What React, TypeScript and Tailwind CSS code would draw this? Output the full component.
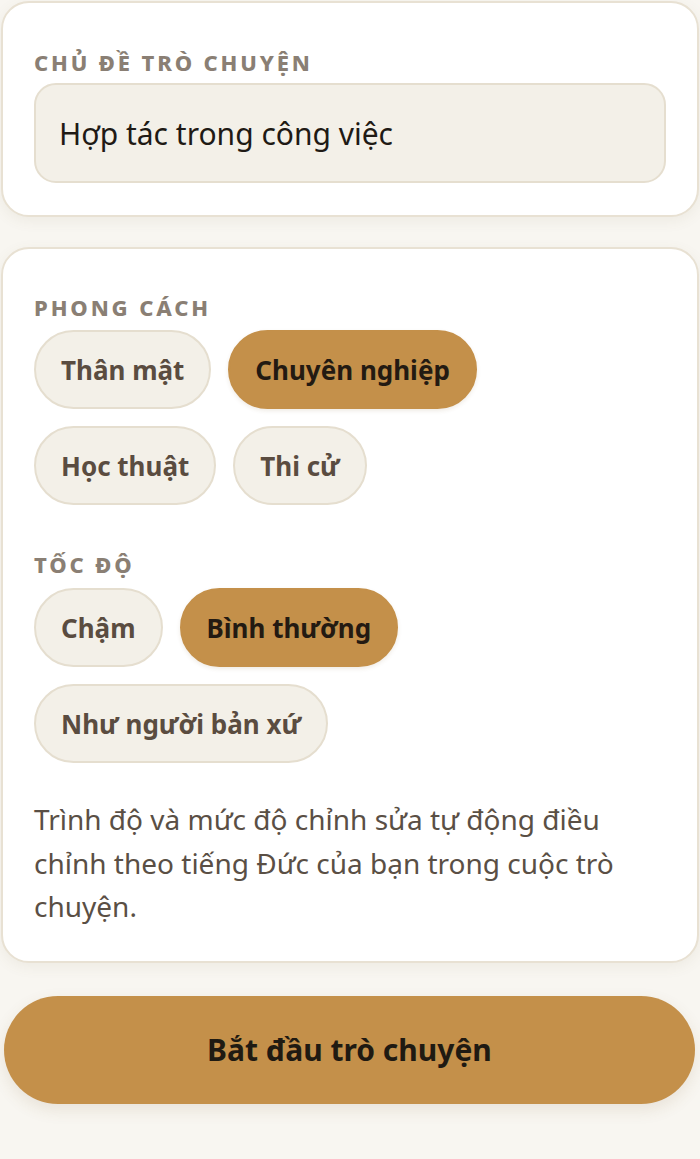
import React from "react";

const font = { fontFamily: "'Noto Sans', 'Open Sans', sans-serif" };

function Chip({ label, active }: { label: string; active?: boolean }) {
  return (
    <button
      className={
        active
          ? "h-[79px] px-[25px] rounded-full border-2 border-[#c4904a] bg-[#c4904a] text-[26px] leading-[32px] font-bold text-[#231a12] shadow-[0_2px_4px_rgba(120,90,40,0.12)]"
          : "h-[79px] px-[25px] rounded-full border-2 border-[#e5decf] bg-[#f3f0e8] text-[26px] leading-[32px] font-bold text-[#5a4c40]"
      }
    >
      {label}
    </button>
  );
}

function Label({ children }: { children: React.ReactNode }) {
  return (
    <div className="text-[22px] leading-[28px] font-extrabold tracking-[0.13em] text-[#8a7f74] uppercase">
      {children}
    </div>
  );
}

export default function App() {
  return (
    <div style={font} className="min-h-[1159px] bg-[#f8f6f1] px-[1px] pt-[1px] pb-[55px]">
      <div className="rounded-[28px] border-2 border-[#e8e1d3] bg-white px-[31px] pt-[45px] pb-[32px] shadow-[0_4px_14px_rgba(120,100,60,0.08)]">
        <Label>Chủ đề trò chuyện</Label>
        <div className="mt-[7px] h-[100px] rounded-[22px] border-2 border-[#e5decf] bg-[#f3f0e8] flex items-center px-[23px] text-[30px] text-[#1f1a15]">
          Hợp tác trong công việc
        </div>
      </div>

      <div className="mt-[30px] rounded-[28px] border-2 border-[#e8e1d3] bg-white px-[31px] pt-[44px] pb-[32px] shadow-[0_4px_14px_rgba(120,100,60,0.08)]">
        <Label>Phong cách</Label>
        <div className="mt-[9px] flex flex-wrap gap-[17px]">
          <Chip label="Thân mật" />
          <Chip label="Chuyên nghiệp" active />
          <Chip label="Học thuật" />
          <Chip label="Thi cử" />
        </div>
        <div className="mt-[45px]">
          <Label>Tốc độ</Label>
        </div>
        <div className="mt-[10px] flex flex-wrap gap-[17px]">
          <Chip label="Chậm" />
          <Chip label="Bình thường" active />
          <Chip label="Như người bản xứ" />
        </div>
        <p className="mt-[35px] text-[28px] leading-[43.5px] text-[#5a4f45]">
          Trình độ và mức độ chỉnh sửa tự động điều chỉnh theo tiếng Đức của bạn trong cuộc trò chuyện.
        </p>
      </div>

      <button className="mt-[33px] mx-[3px] w-[691px] h-[108px] rounded-full bg-[#c4904a] text-[30px] font-bold text-[#1f1a12] shadow-[0_6px_16px_rgba(120,90,40,0.12)]">
        Bắt đầu trò chuyện
      </button>
    </div>
  );
}
